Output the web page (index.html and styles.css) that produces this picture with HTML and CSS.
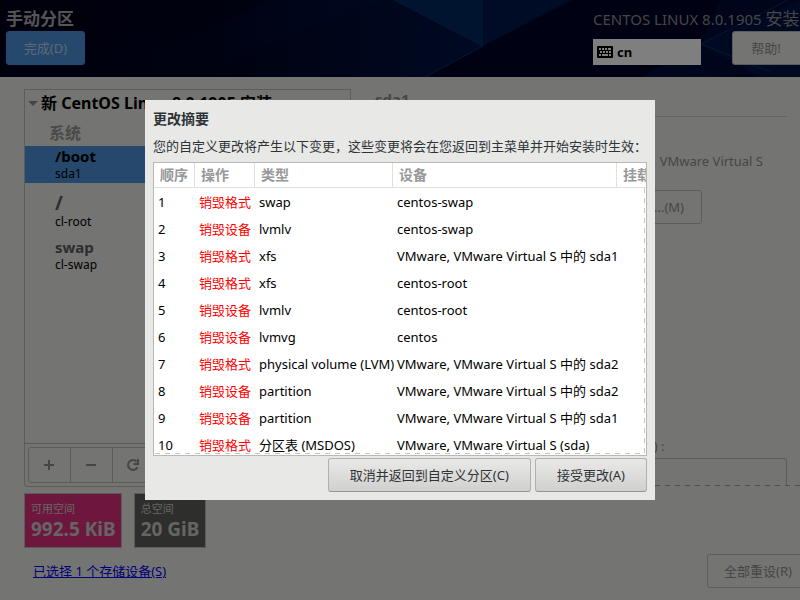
FILE: index.html
```html
<!DOCTYPE html>
<html lang="zh-CN">
<head>
<meta charset="utf-8">
<title>手动分区</title>
<link rel="stylesheet" href="styles.css">
</head>
<body>
<div class="screen">
  <header class="banner">
    <svg class="banner-art" viewBox="0 0 800 77" preserveAspectRatio="none" aria-hidden="true">
      <defs>
        <linearGradient id="night" x1="0" x2="1"><stop offset="0" stop-color="#00021c"/><stop offset=".25" stop-color="#000422"/><stop offset=".5" stop-color="#001044"/><stop offset="1" stop-color="#000a34"/></linearGradient>
        <linearGradient id="peak" x1="0" x2="1"><stop offset="0" stop-color="#000422"/><stop offset="1" stop-color="#001448"/></linearGradient>
      </defs>
      <rect width="800" height="77" fill="url(#night)"/>
      <path d="M0 0H270L180 40L0 50Z" fill="#000218" opacity=".5"/>
      <path d="M230 60L360 5L394 0L483 46L425 77H230Z" fill="url(#peak)"/>
      <path d="M394 0H483V46Z" fill="#002860"/>
      <path d="M483 0H572L483 46Z" fill="#00184a"/>
      <path d="M483 46L572 0H720L701 44L640 77H425Z" fill="#000326"/>
      <path d="M701 44L800 0V77H760Z" fill="#001244"/>
      <path d="M394 0L483 46L425 77M701 44L788 0M701 44L770 72" fill="none" stroke="#043068"/>
    </svg>
    <div class="banner-left">
      <h1>手动分区</h1>
      <button class="done">完成(D)</button>
    </div>
    <div class="banner-right">
      <div class="product">CENTOS LINUX 8.0.1905 <span>安装</span></div>
      <div class="banner-tools">
        <div class="layout">
          <svg width="16" height="12" viewBox="0 0 16 12" aria-hidden="true"><rect width="16" height="12" rx="1" fill="#000"/><path d="M2 3h2m1 0h2m1 0h2m1 0h3M3 6h2m1 0h2m1 0h2m1 0h2M2 9h2m1 0h6m1 0h2" stroke="#fff" stroke-width="2"/></svg>
          <span>cn</span>
        </div>
        <button class="plain help">帮助!</button>
      </div>
    </div>
  </header>
  <main class="content">
    <section class="side">
      <div class="tree">
        <div class="tree-title"><span class="arrow"></span>新 CentOS Linux 8.0.1905 安装</div>
        <div class="group">系统</div>
        <ul class="mounts">
          <li class="selected"><b>/boot</b><span>sda1</span></li>
          <li class="root"><b>/</b><span>cl-root</span></li>
          <li><b>swap</b><span>cl-swap</span></li>
        </ul>
      </div>
      <div class="toolbar">
        <button aria-label="添加"><svg width="12" height="12" viewBox="0 0 12 12"><path d="M6 1v10M1 6h10" stroke="currentColor" stroke-width="2"/></svg></button>
        <button aria-label="删除"><svg width="12" height="12" viewBox="0 0 12 12"><path d="M1 6h10" stroke="currentColor" stroke-width="2"/></svg></button>
        <button aria-label="刷新"><svg width="14" height="14" viewBox="0 0 14 14"><path d="M10.600 3.500A5 5 0 1 0 11.500 9.200" fill="none" stroke="currentColor" stroke-width="2"/><path d="M13 1v6H7.500V5H11V1Z" fill="currentColor"/></svg></button>
      </div>
      <div class="spaces">
        <div class="space pink"><span>可用空间</span><b>992.5 KiB</b></div>
        <div class="space dark"><span>总空间</span><b>20 GiB</b></div>
      </div>
      <a class="devices" href="#">已选择 1 个存储设备(S)</a>
    </section>
    <section class="detail">
      <h2>sda1</h2>
      <p class="device-name">VMware, VMware Virtual S</p>
      <button class="plain modify">修改...(M)</button>
      <label class="name-label" for="name">名称(N) :</label>
      <input class="name" id="name" type="text">
      <div class="edge"></div>
      <button class="plain reset">全部重设(R)</button>
    </section>
  </main>
</div>
<div class="shade">
  <div class="dialog" role="dialog" aria-labelledby="dialog-title">
    <h3 id="dialog-title">更改摘要</h3>
    <p>您的自定义更改将产生以下变更，这些变更将会在您返回到主菜单并开始安装时生效：</p>
    <div class="table-box">
      <table>
        <colgroup><col class="c1"><col class="c2"><col class="c3"><col class="c4"><col class="c5"></colgroup>
        <thead><tr><th>顺序</th><th>操作</th><th>类型</th><th>设备</th><th>挂载点</th></tr></thead>
        <tbody>
          <tr><td>1</td><td>销毁格式</td><td>swap</td><td>centos-swap</td><td></td></tr>
          <tr><td>2</td><td>销毁设备</td><td>lvmlv</td><td>centos-swap</td><td></td></tr>
          <tr><td>3</td><td>销毁格式</td><td>xfs</td><td>VMware, VMware Virtual S 中的 sda1</td><td></td></tr>
          <tr><td>4</td><td>销毁格式</td><td>xfs</td><td>centos-root</td><td></td></tr>
          <tr><td>5</td><td>销毁设备</td><td>lvmlv</td><td>centos-root</td><td></td></tr>
          <tr><td>6</td><td>销毁设备</td><td>lvmvg</td><td>centos</td><td></td></tr>
          <tr><td>7</td><td>销毁格式</td><td>physical volume (LVM)</td><td>VMware, VMware Virtual S 中的 sda2</td><td></td></tr>
          <tr><td>8</td><td>销毁设备</td><td>partition</td><td>VMware, VMware Virtual S 中的 sda2</td><td></td></tr>
          <tr><td>9</td><td>销毁设备</td><td>partition</td><td>VMware, VMware Virtual S 中的 sda1</td><td></td></tr>
          <tr><td>10</td><td>销毁格式</td><td>分区表 (MSDOS)</td><td>VMware, VMware Virtual S (sda)</td><td></td></tr>
        </tbody>
      </table>
    </div>
    <div class="actions">
      <button>取消并返回到自定义分区(C)</button>
      <button>接受更改(A)</button>
    </div>
  </div>
</div>
</body>
</html>
```

FILE: styles.css
```css
* { box-sizing: border-box; }
body {
  margin: 0;
  background: #e8e8e7;
  font: 13px/20px "Noto Sans", "Noto Sans CJK SC", sans-serif;
  color: #2e3436;
  overflow: hidden;
}
h1, h2, h3, p, ul { margin: 0; padding: 0; }
button, input { font: inherit; }
.screen { display: flex; flex-direction: column; height: 100vh; overflow: hidden; }

.banner {
  position: relative;
  display: flex;
  justify-content: space-between;
  height: 77px;
  flex: none;
  padding: 9px 0 0 6px;
  overflow: hidden;
}
.banner-art { position: absolute; inset: 0; width: 100%; height: 100%; }
.banner-left, .banner-right { position: relative; }
.banner h1 { font-size: 17px; line-height: 20px; margin-bottom: 2px; color: #aaa; }
.done {
  width: 79px;
  height: 34px;
  border: 1px solid #4a90d9;
  border-radius: 3px;
  background: #4a90d9;
  color: #bcd3ea;
}
.banner-right { width: 207px; flex: none; }
.product { font-size: 15px; line-height: 20px; height: 20px; margin-bottom: 2px; color: #8c8c8c; white-space: nowrap; }
.product span { font-size: 17px; }
.banner-tools { display: flex; align-items: flex-end; gap: 31px; }
.layout {
  display: flex;
  align-items: center;
  gap: 4px;
  width: 108px;
  height: 26px;
  flex: none;
  padding-left: 4px;
  background: #fff;
  color: #000;
  font-weight: bold;
}
.plain {
  height: 34px;
  border: 1px solid #b8b8b5;
  border-radius: 3px;
  background: #e8e8e7;
  color: #8b8e8f;
  white-space: nowrap;
}
.help { width: 76px; flex: none; padding: 0 8px 0 0; }

.content { display: flex; flex: 1; padding: 12px 13px 12px 24px; gap: 24px; }
.side { width: 327px; flex: none; display: flex; flex-direction: column; }
.tree { height: 355px; border: 1px solid #b8b8b5; }
.tree-title {
  display: flex;
  align-items: center;
  gap: 3px;
  padding: 2px 0 0 3px;
  color: #000;
  font-size: 16px;
  font-weight: bold;
  line-height: 22px;
}
.arrow { border: 5px solid transparent; border-top-color: #8b8e8f; border-bottom: 0; }
.group { padding-left: 24px; margin: 8px 0 2px; color: #949494; font-size: 16px; font-weight: bold; line-height: 22px; }
.mounts { list-style: none; }
.mounts li { display: flex; flex-direction: column; padding-left: 30px; margin-bottom: 9px; color: #000; font-size: 12px; line-height: 16px; }
.mounts b { color: #5c5c5c; font-size: 15px; line-height: 20px; }
.mounts .selected { background: #4a90d9; height: 37px; }
.mounts .selected b { color: #000; }
.mounts .root { margin-bottom: 7px; }
.mounts .root b { font-size: 19px; line-height: 22px; }
.toolbar { display: flex; height: 43px; padding: 3px; border: 1px solid #b8b8b5; border-top: 0; border-radius: 0 0 4px 4px; }
.toolbar button {
  display: grid;
  place-items: center;
  width: 43px;
  height: 36px;
  margin-right: -1px;
  padding: 0 2px 0 0;
  border: 1px solid #b8b8b5;
  background: #e8e8e7;
  color: #8b8e8f;
}
.toolbar button:first-child { border-radius: 3px 0 0 3px; }
.spaces { display: flex; gap: 12px; margin: 6px 0 13px; }
.space {
  display: flex;
  flex-direction: column;
  min-width: 72px;
  height: 55px;
  padding: 6px 5px 6px 6px;
  border: 1px solid #b8b8b5;
  color: #cacaca;
  font-size: 11px;
  line-height: 18px;
  white-space: nowrap;
}
.space b { font-size: 19px; line-height: 22px; }
.pink { background: #dd2f7c; }
.dark { background: #5c5c58; }
.devices { align-self: flex-start; margin-left: 9px; color: #0000ee; }

.detail { flex: 1; display: flex; flex-direction: column; color: #8b8e8f; min-width: 0; }
.detail h2 { font-size: 15px; line-height: 20px; padding-bottom: 7px; border-bottom: 1px solid #c8c8c5; }
.device-name { align-self: flex-end; margin: 34px 24px 19px 0; }
.modify { align-self: flex-end; width: 92px; margin-right: 85px; }
.name-label { margin: 212px 0 2px; padding-left: 239px; }
.name { height: 27px; border: 1px solid #b8b8b5; border-bottom: 0; border-radius: 3px 3px 0 0; background: #e8e8e7; }
.edge {
  height: 1px;
  margin-right: -13px;
  background: repeating-linear-gradient(90deg, #a0a09e 0 5px, transparent 5px 10px);
}
.reset { align-self: flex-end; width: 102px; margin: 68px -22px 0 0; }

.shade { position: fixed; inset: 0; display: grid; place-items: center; background: rgba(0, 0, 0, .5); }
.dialog { width: 510px; padding: 8px; background: #e8e8e7; }
.dialog h3 { font-size: 14px; line-height: 22px; }
.dialog p { line-height: 20px; margin: 6px 0; white-space: nowrap; }
.table-box {
  position: relative;
  height: 294px;
  border: 1px solid #b8b8b5;
  background: #fff;
  overflow: hidden;
}
.table-box::after {
  content: "";
  position: absolute;
  inset: 25px 1px 1px 1px;
  background:
    repeating-linear-gradient(90deg, #c4c4c2 0 5px, transparent 5px 10px) bottom / 100% 1px no-repeat,
    repeating-linear-gradient(180deg, #c4c4c2 0 5px, transparent 5px 10px) right / 1px 100% no-repeat;
}
table { width: 540px; table-layout: fixed; border-collapse: separate; border-spacing: 0; color: #000; white-space: nowrap; }
.c1 { width: 41px; }
.c2 { width: 60px; }
.c3 { width: 138px; }
.c4 { width: 224px; }
th {
  height: 25px;
  padding: 0 6px;
  border-right: 1px solid #e0e0de;
  border-bottom: 1px solid #e0e0de;
  color: #969899;
  font-size: 14px;
  text-align: left;
}
td { height: 27px; padding: 0 4px; }
td:nth-child(2) { color: #f00; }
.actions { display: flex; justify-content: flex-end; gap: 4px; margin-top: 2px; }
.actions button {
  height: 34px;
  padding: 0 21px;
  border: 1px solid #b0b0ad;
  border-bottom-color: #959592;
  border-radius: 3px;
  background: linear-gradient(#e9e9e8, #d0d0ce);
  color: #2e3436;
}
```
